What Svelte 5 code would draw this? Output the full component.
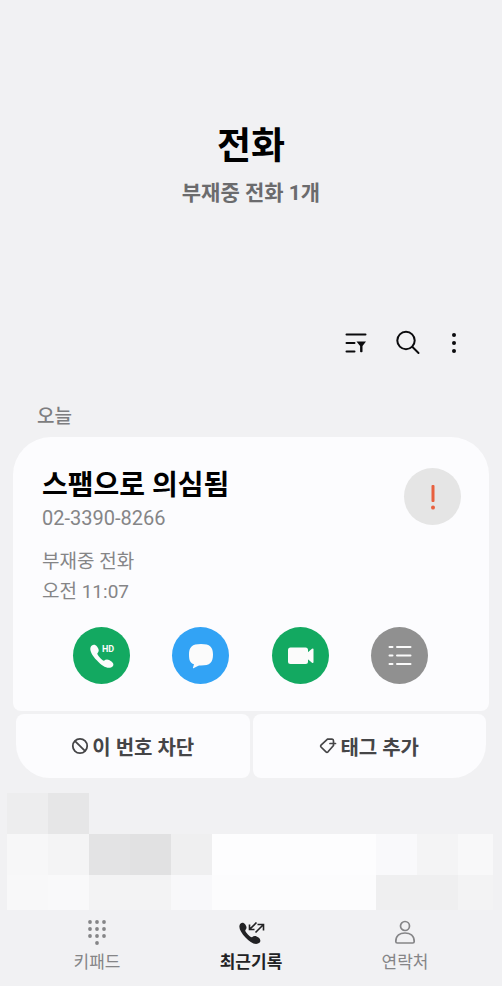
<script lang="ts">
	const days = { today: '오늘' };
	const call = {
		name: '스팸으로 의심됨',
		number: '02-3390-8266',
		type: '부재중 전화',
		time: '오전 11:07'
	};

	// one row per line of hidden entries, one shade per cell
	const mosaic = [
		['#ededee', '#e6e6e7', '#f1f1f3', '#f1f1f3', '#f1f1f3', '#f1f1f3', '#f1f1f3', '#f1f1f3', '#f1f1f3', '#f1f1f3', '#f1f1f3', '#f1f1f3'],
		['#f7f7f8', '#f4f4f5', '#e3e3e4', '#e1e1e2', '#efeff0', '#fdfdfe', '#fdfdfe', '#fdfdfe', '#fdfdfe', '#f9f9fb', '#f4f4f5', '#f8f8f9'],
		['#f8f8f9', '#f9f9fa', '#f3f3f4', '#f3f3f4', '#f8f8fa', '#fcfcfd', '#fcfcfd', '#fcfcfd', '#fcfcfd', '#efeff0', '#efeff0', '#f3f3f4']
	];

	const keypadDots = [
		[4, 3], [11, 3], [18, 3],
		[4, 10], [11, 10], [18, 10],
		[4, 17], [11, 17], [18, 17],
		[11, 24]
	];

	let tab = $state('recents');
</script>

<div class="phone">
	<header>
		<h1>전화</h1>
		<p>부재중 전화 1개</p>
	</header>

	<div class="toolbar">
		<button aria-label="필터">
			<svg width="24" height="24" viewBox="0 0 24 24">
				<path d="M2.5 3.5h19M2.5 12h8M2.5 20.5h8" fill="none" stroke="#0b0b0d" stroke-width="2" stroke-linecap="round" />
				<path d="M12.5 10.5h9.5l-3.5 4.5v5.5q0 .8-.8.8h-.8q-.8 0-.8-.8V15z" fill="#0b0b0d" />
			</svg>
		</button>
		<button aria-label="검색">
			<svg width="28" height="28" viewBox="0 0 28 28" fill="none" stroke="#0b0b0d" stroke-width="2" stroke-linecap="round">
				<circle cx="12" cy="11.5" r="8.7" />
				<path d="M18.5 18l6 6" />
			</svg>
		</button>
		<button class="more" aria-label="더보기">
			<svg width="8" height="24" viewBox="0 0 8 24" fill="#0b0b0d">
				<circle cx="4" cy="4" r="2" />
				<circle cx="4" cy="12" r="2" />
				<circle cx="4" cy="20" r="2" />
			</svg>
		</button>
	</div>

	<main>
		<h2>{days.today}</h2>

		<section class="card">
			<div class="info">
				<div>
					<h3>{call.name}</h3>
					<p class="number">{call.number}</p>
					<p>{call.type}</p>
					<p>{call.time}</p>
				</div>
				<span class="badge">
					<svg width="12" height="28" viewBox="0 0 12 28" fill="#e8603f">
						<rect x="4.5" y="2" width="3" height="17" rx="1" />
						<circle cx="6" cy="24.5" r="2" />
					</svg>
				</span>
			</div>

			<div class="actions">
				<button class="green" aria-label="HD 통화">
					<svg width="57" height="57" viewBox="0 0 57 57" fill="#fbfbfb">
						<path d="M17.5 20.5C18.5 17.5 22 16.7 24 19.5C26.5 23 26 24.5 24.3 26.5C23.8 27.5 29.5 34 31 33.8C33 31.8 35.5 32 38.5 34.5C41.5 37 40.7 39.5 38 40.5C34 42 28.5 38.5 24 33.5C19 28.5 16.5 23.5 17.5 20.5Z" />
						<text x="29" y="25">HD</text>
					</svg>
				</button>
				<button class="blue" aria-label="메시지">
					<svg width="57" height="57" viewBox="0 0 57 57" fill="#fbfbfb">
						<path d="M29 17C38 17 41 20 41 27.5C41 35.5 38 38.5 29 38.5H27Q24.5 39.5 21.5 41.2Q20.6 41.5 21 40.5L22 37.3C18 36 17 33 17 27.5C17 20 20 17 29 17Z" />
					</svg>
				</button>
				<button class="green" aria-label="영상 통화">
					<svg width="57" height="57" viewBox="0 0 57 57" fill="#fbfbfb">
						<rect x="16" y="20.5" width="20" height="16.5" rx="2.5" />
						<path d="M35 26L40 21.8Q41.5 21 41.5 22.5V35Q41.5 36.5 40 35.7L35 31.5Z" />
					</svg>
				</button>
				<button class="grey" aria-label="상세정보">
					<svg width="57" height="57" viewBox="0 0 57 57" stroke="#fbfbfb" stroke-width="2" stroke-linecap="round">
						<path d="M18.500 20h3M26 20h13.500M18.500 28.500h3M26 28.500h13.500M18.500 37h3M26 37h13.500" />
					</svg>
				</button>
			</div>
		</section>

		<div class="options">
			<button>
				<svg width="18" height="18" viewBox="0 0 18 18" fill="none" stroke="#454547" stroke-width="1.8">
					<circle cx="9" cy="9" r="7.2" />
					<path d="M3.8 3.8L14.2 14.2" />
				</svg>
				이 번호 차단
			</button>
			<button>
				<svg width="18" height="18" viewBox="0 0 18 18" fill="none" stroke="#454547" stroke-width="1.7" stroke-linecap="round" stroke-linejoin="round">
					<path d="M8.5 2.2L13 2Q14.5 2.2 14.5 4V8.5L9 14.8Q8 15.8 7 14.8L2 10Q1.2 9 2 8.2Z" />
					<path d="M11 6.5H16.5" />
				</svg>
				태그 추가
			</button>
		</div>

		<div class="mosaic" aria-hidden="true">
			{#each mosaic as row}
				{#each row as shade}
					<span style:background={shade}></span>
				{/each}
			{/each}
		</div>
	</main>

	<nav>
		<button class:active={tab === 'keypad'} onclick={() => (tab = 'keypad')}>
			<svg width="22" height="28" viewBox="0 0 22 28" fill="currentColor">
				{#each keypadDots as [x, y]}
					<circle cx={x} cy={y} r="1.9" />
				{/each}
			</svg>
			키패드
		</button>
		<button class:active={tab === 'recents'} onclick={() => (tab = 'recents')}>
			<svg width="28" height="28" viewBox="0 0 28 28" fill="currentColor">
				<path d="M2.5 6.5C3.3 3.3 6.5 3 8.3 5.5C10.3 8.3 9.5 10 8.3 11.3C7.8 12.5 13.5 18.8 15 18.3C17 16.3 19 16.5 21.5 18.5C24.5 21 23.5 23.5 21 24.5C17.5 26 12.5 23 8.5 18.5C4.5 14 1.7 9.8 2.5 6.5Z" />
				<path d="M19.5 3.5L12.5 10.5M12.5 5.5V10.5H17.5M18.5 13.5L26 6M20.5 5.5H26.5V11.5" fill="none" stroke="currentColor" stroke-width="1.6" />
			</svg>
			최근기록
		</button>
		<button class:active={tab === 'contacts'} onclick={() => (tab = 'contacts')}>
			<svg width="22" height="28" viewBox="0 0 22 28" fill="none" stroke="currentColor" stroke-width="1.7">
				<circle cx="11" cy="7" r="4.5" />
				<path d="M1.8 22.5C1.8 16.5 6 14 11 14C16 14 20.2 16.5 20.2 22.5Q20.2 24 18.7 24H3.3Q1.8 24 1.8 22.5Z" />
			</svg>
			연락처
		</button>
	</nav>
</div>

<style>
	:global(body) {
		margin: 0;
		background: #f1f1f3;
	}

	.phone {
		display: flex;
		flex-direction: column;
		min-height: 100vh;
		font-family: Roboto, 'Noto Sans CJK KR', sans-serif;
		color: #000;
	}

	h1,
	h2,
	h3,
	p {
		margin: 0;
	}

	button {
		display: flex;
		align-items: center;
		justify-content: center;
		padding: 0;
		border: 0;
		background: none;
		font-family: inherit;
		cursor: pointer;
	}

	svg {
		flex: none;
	}

	header {
		padding-top: 123px;
		text-align: center;
	}

	header h1 {
		font-size: 37px;
		line-height: 48px;
		font-weight: 700;
	}

	header p {
		margin-top: 8px;
		font-size: 21px;
		line-height: 28px;
		font-weight: 700;
		color: #6b6b6d;
	}

	.toolbar {
		display: flex;
		justify-content: flex-end;
		gap: 4px;
		margin-top: 112px;
		padding-right: 32px;
	}

	.toolbar button {
		width: 48px;
		height: 48px;
	}

	.toolbar .more {
		width: 32px;
		margin-left: 2px;
	}

	main {
		padding: 0 13px;
	}

	h2 {
		margin: 38px 24px 8px;
		font-size: 19px;
		line-height: 24px;
		font-weight: 500;
		color: #7d7d80;
	}

	.card {
		padding: 31px 28px 27px 29px;
		border-radius: 38px 38px 8px 8px;
		background: #fcfcfe;
	}

	.info {
		display: flex;
		justify-content: space-between;
	}

	.info h3 {
		font-size: 28px;
		line-height: 36px;
		font-weight: 700;
	}

	.info p {
		font-size: 19px;
		line-height: 30px;
		color: #858587;
	}

	.info .number {
		margin-bottom: 15px;
		font-size: 20px;
		line-height: 28px;
	}

	.badge {
		display: flex;
		align-items: center;
		justify-content: center;
		width: 57px;
		height: 57px;
		border-radius: 50%;
		background: #e5e5e5;
	}

	.actions {
		display: flex;
		justify-content: space-between;
		margin-top: 20px;
		padding: 0 33px 0 31px;
	}

	.actions button {
		width: 57px;
		height: 57px;
		border-radius: 50%;
	}

	.actions text {
		font-size: 9px;
		font-weight: 700;
	}

	.green {
		background: #13a961;
	}

	.blue {
		background: #32a3f5;
	}

	.grey {
		background: #909090;
	}

	.options {
		display: flex;
		gap: 3px;
		margin: 3px 3px 0;
	}

	.options button {
		flex: 1;
		gap: 3px;
		height: 64px;
		border-radius: 8px;
		background: #fcfcfe;
		font-size: 20px;
		font-weight: 700;
		color: #454547;
	}

	.options button:first-child {
		border-bottom-left-radius: 34px;
	}

	.options button:last-child {
		border-bottom-right-radius: 34px;
	}

	.mosaic {
		display: grid;
		grid-template-columns: repeat(11, 41fr) 35fr;
		grid-template-rows: 41px 41px 35px;
		margin: 15px -4px 0 -6px;
	}

	nav {
		display: grid;
		grid-template-columns: repeat(3, 1fr);
		padding: 9px 20px 12px;
	}

	nav button {
		flex-direction: column;
		gap: 3px;
		font-size: 17px;
		line-height: 24px;
		color: #858587;
	}

	nav .active {
		font-weight: 700;
		color: #222224;
	}
</style>
